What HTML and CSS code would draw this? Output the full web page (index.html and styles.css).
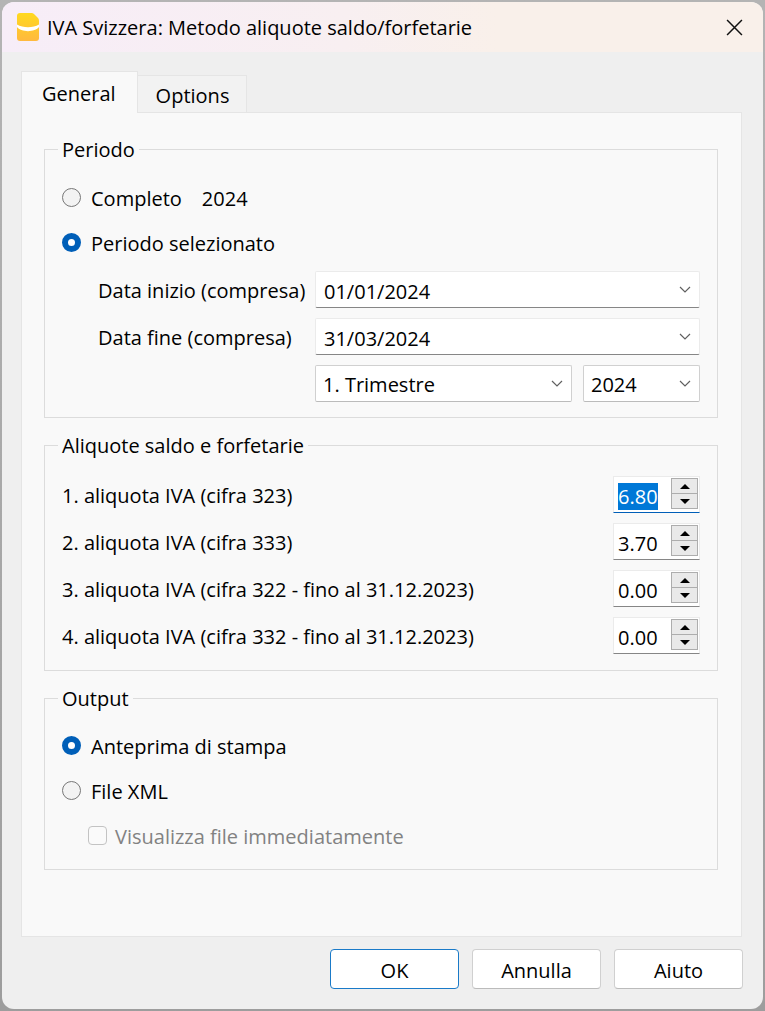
FILE: index.html
```
<!DOCTYPE html>
<html lang="it">
<head>
<meta charset="utf-8">
<meta name="viewport" content="width=device-width, initial-scale=1">
<title>IVA Svizzera</title>
<link rel="stylesheet" href="styles.css">
<script src="dialog.js" defer></script>
</head>
<body>
<main class="dialog">
  <header class="titlebar">
    <svg class="logo" viewBox="0 0 22 28" aria-hidden="true">
      <defs><linearGradient id="gold" x1="0" y1="0" x2="0" y2="1"><stop offset="0" stop-color="#ffd91f"/><stop offset="1" stop-color="#ffb93e"/></linearGradient></defs>
      <path d="M3 0h11.500q1.500 0 2.500 1l4 4q1 1 1 2.500V25a3 3 0 0 1-3 3H3a3 3 0 0 1-3-3V3a3 3 0 0 1 3-3z" fill="url(#gold)"/>
      <path d="M0 11.500c6 3.500 16 3.500 22 0v2.500c-4 5.500-18 5.500-22 0z" fill="#fff"/>
    </svg>
    <h1 class="title">IVA Svizzera: Metodo aliquote saldo/forfetarie</h1>
    <button class="close" type="button" aria-label="Chiudi">
      <svg class="close-icon" viewBox="0 0 16 16" aria-hidden="true"><path d="M1 1l14 14M15 1L1 15"/></svg>
    </button>
  </header>

  <form class="content">
    <div class="tabs" role="tablist">
      <button class="tab tab-active" type="button" role="tab" aria-selected="true">General</button>
      <button class="tab" type="button" role="tab" aria-selected="false">Options</button>
    </div>

    <div class="pane" role="tabpanel">
      <fieldset class="group group-period">
        <legend>Periodo</legend>
        <div class="choices">
          <div class="choice"><input class="radio" type="radio" name="period" id="full"><label for="full">Completo</label><span class="year">2024</span></div>
          <div class="choice"><input class="radio" type="radio" name="period" id="selected" checked><label for="selected">Periodo selezionato</label></div>
        </div>
        <div class="dates">
          <label for="start">Data inizio (compresa)</label>
          <div class="combo"><select class="field field-date" id="start"><option>01/01/2024</option></select><svg class="chevron" viewBox="0 0 12 8" aria-hidden="true"><path d="M1 1l5 5 5-5"/></svg></div>
          <label for="end">Data fine (compresa)</label>
          <div class="combo"><select class="field field-date" id="end"><option>31/03/2024</option></select><svg class="chevron" viewBox="0 0 12 8" aria-hidden="true"><path d="M1 1l5 5 5-5"/></svg></div>
          <div class="presets">
            <div class="combo"><select class="field" aria-label="Trimestre"><option>1. Trimestre</option></select><svg class="chevron" viewBox="0 0 12 8" aria-hidden="true"><path d="M1 1l5 5 5-5"/></svg></div>
            <div class="combo"><select class="field" aria-label="Anno"><option>2024</option></select><svg class="chevron" viewBox="0 0 12 8" aria-hidden="true"><path d="M1 1l5 5 5-5"/></svg></div>
          </div>
        </div>
      </fieldset>

      <fieldset class="group group-rates">
        <legend>Aliquote saldo e forfetarie</legend>
        <div class="rate"><label for="rate1">1. aliquota IVA (cifra 323)</label>
          <div class="spin"><input class="spin-value" id="rate1" type="text" inputmode="decimal" value="6.80"><div class="steps"><button class="step" type="button" aria-label="Aumenta"><svg class="arrow" viewBox="0 0 10 5"><path d="M0 5l5-5 5 5z"/></svg></button><button class="step" type="button" aria-label="Diminuisci"><svg class="arrow" viewBox="0 0 10 5"><path d="M0 0h10L5 5z"/></svg></button></div></div></div>
        <div class="rate"><label for="rate2">2. aliquota IVA (cifra 333)</label>
          <div class="spin"><input class="spin-value" id="rate2" type="text" inputmode="decimal" value="3.70"><div class="steps"><button class="step" type="button" aria-label="Aumenta"><svg class="arrow" viewBox="0 0 10 5"><path d="M0 5l5-5 5 5z"/></svg></button><button class="step" type="button" aria-label="Diminuisci"><svg class="arrow" viewBox="0 0 10 5"><path d="M0 0h10L5 5z"/></svg></button></div></div></div>
        <div class="rate"><label for="rate3">3. aliquota IVA (cifra 322 - fino al 31.12.2023)</label>
          <div class="spin"><input class="spin-value" id="rate3" type="text" inputmode="decimal" value="0.00"><div class="steps"><button class="step" type="button" aria-label="Aumenta"><svg class="arrow" viewBox="0 0 10 5"><path d="M0 5l5-5 5 5z"/></svg></button><button class="step" type="button" aria-label="Diminuisci"><svg class="arrow" viewBox="0 0 10 5"><path d="M0 0h10L5 5z"/></svg></button></div></div></div>
        <div class="rate"><label for="rate4">4. aliquota IVA (cifra 332 - fino al 31.12.2023)</label>
          <div class="spin"><input class="spin-value" id="rate4" type="text" inputmode="decimal" value="0.00"><div class="steps"><button class="step" type="button" aria-label="Aumenta"><svg class="arrow" viewBox="0 0 10 5"><path d="M0 5l5-5 5 5z"/></svg></button><button class="step" type="button" aria-label="Diminuisci"><svg class="arrow" viewBox="0 0 10 5"><path d="M0 0h10L5 5z"/></svg></button></div></div></div>
      </fieldset>

      <fieldset class="group group-output">
        <legend>Output</legend>
        <div class="choices">
          <div class="choice"><input class="radio" type="radio" name="output" id="preview" checked><label for="preview">Anteprima di stampa</label></div>
          <div class="choice"><input class="radio" type="radio" name="output" id="xml"><label for="xml">File XML</label></div>
          <div class="choice choice-nested"><input class="check" type="checkbox" id="show" disabled><label for="show">Visualizza file immediatamente</label></div>
        </div>
      </fieldset>
    </div>

    <footer class="actions">
      <button class="action action-default" type="submit">OK</button>
      <button class="action" type="button">Annulla</button>
      <button class="action" type="button">Aiuto</button>
    </footer>
  </form>
</main>
</body>
</html>
```
FILE: styles.css
```
* { box-sizing: border-box; }

body {
  margin: 0;
  padding: 2px;
  min-height: 100vh;
  display: flex;
  background: linear-gradient(#b4b4b4, #9d9d9d);
  font: 20px/26px "Segoe UI", "Open Sans", sans-serif;
  color: #000;
}

button, input, select { font: inherit; color: inherit; margin: 0; }

.dialog {
  flex: 1;
  display: flex;
  flex-direction: column;
  background: #efefef;
  border-radius: 12px;
  overflow: hidden;
}

.titlebar {
  display: flex;
  align-items: center;
  height: 50px;
  padding: 0 20px 0 15px;
  background: linear-gradient(90deg, #f7edf8, #f8eff1 45%, #f9f0ea 65%);
}
.logo { width: 22px; height: 28px; }
.title { flex: 1; margin: 0 0 0 8px; padding-top: 2px; font-size: 20px; font-weight: 400; }
.close { display: flex; padding: 0; border: 0; background: none; }
.close-icon { width: 17px; height: 17px; fill: none; stroke: #111; stroke-width: 1.4; }

.content { flex: 1; display: flex; flex-direction: column; padding: 19px 20px 20px 19px; }

.tabs { display: flex; align-items: flex-end; }
.tab {
  height: 37px;
  padding: 4px 17px 0 18px;
  border: 1px solid #e5e5e5;
  border-width: 1px 1px 0 0;
  background: #f2f2f2;
}
.tab-active {
  position: relative;
  height: 42px;
  margin-bottom: -1px;
  padding: 2px 21px 0 20px;
  border-left-width: 1px;
  background: #f9f9f9;
}

.pane {
  flex: 1;
  display: flex;
  flex-direction: column;
  gap: 13px;
  margin-right: 1px;
  padding: 22px 23px 24px 22px;
  border: 1px solid #e5e5e5;
  background: #f9f9f9;
}

.group { min-width: 0; margin: 0; border: 1px solid #dcdcdc; }
.group legend { padding: 2px 4px 0; margin-left: -4px; }
.group-period { padding: 23px 17px 15px; }
.group-rates { display: flex; flex-direction: column; gap: 10px; padding: 17px 17px 16px; }
.group-output { padding: 22px 17px 19px; }

.choices { display: flex; flex-direction: column; gap: 19px; }
.choice { display: flex; align-items: center; gap: 10px; }
.choice-nested { padding-left: 26px; gap: 8px; color: #828282; }
.year { margin-left: 10px; }

.radio, .check { appearance: none; width: 19px; height: 19px; margin-bottom: 4px; background: #f3f3f3; }
.radio { border: 1px solid #777; border-radius: 50%; }
.radio:checked { border: 6px solid #005fb8; background: #fff; }
.check { border: 1px solid #c3c3c3; border-radius: 4px; background: #fafafa; }

.dates {
  display: grid;
  grid-template-columns: 253px 1fr;
  gap: 10px 0;
  align-items: center;
  margin-top: 14px;
}
.dates > label { padding: 2px 0 0 36px; }
.presets { grid-column: 2; display: grid; grid-template-columns: 1fr 117px; gap: 11px; }

.combo { display: grid; align-items: center; }
.combo > * { grid-area: 1 / 1; }
.field {
  appearance: none;
  width: 100%;
  height: 37px;
  padding: 2px 30px 0 7px;
  border: 1px solid #d0d0d0;
  border-bottom-color: #bbb;
  border-radius: 2px;
  background: #fff;
}
.field-date { padding-top: 4px; padding-left: 8px; border-color: #ebebeb; border-bottom-color: #868686; }
.chevron {
  justify-self: end;
  width: 12px;
  height: 8px;
  margin-right: 9px;
  fill: none;
  stroke: #606060;
  stroke-width: 1.2;
  pointer-events: none;
}

.rate { display: flex; align-items: center; justify-content: space-between; }
.rate > label { padding-top: 2px; }
.spin {
  display: flex;
  align-items: flex-start;
  width: 87px;
  height: 37px;
  padding: 1px 1px 0 4px;
  border: 1px solid #ebebeb;
  border-bottom-color: #868686;
  background: #fff;
}
.spin:focus-within { border-bottom-color: #005fb8; }
.spin-value { flex: 1; min-width: 0; height: 34px; padding: 2px 0 0; border: 0; outline: 0; background: none; }
.spin-value::selection { background: #0078d7; color: #fff; }
.steps { display: flex; flex-direction: column; width: 27px; border: 1px solid #adadad; }
.step { display: flex; align-items: center; justify-content: center; height: 14px; padding: 0; border: 0; background: #e9e9e9; }
.step + .step { height: 15px; border-top: 1px solid #adadad; }
.arrow { width: 10px; height: 5px; }

.actions { display: flex; justify-content: flex-end; gap: 13px; margin-top: 12px; }
.action {
  width: 129px;
  height: 40px;
  padding: 4px 0 0;
  border: 1px solid #d0d0d0;
  border-bottom-color: #bbb;
  border-radius: 4px;
  background: #fff;
}
.action-default { border-color: #1a7ac8; }
```
FILE: dialog.js
```
const firstRate = document.getElementById("rate1");
firstRate.focus();
firstRate.select();
```
